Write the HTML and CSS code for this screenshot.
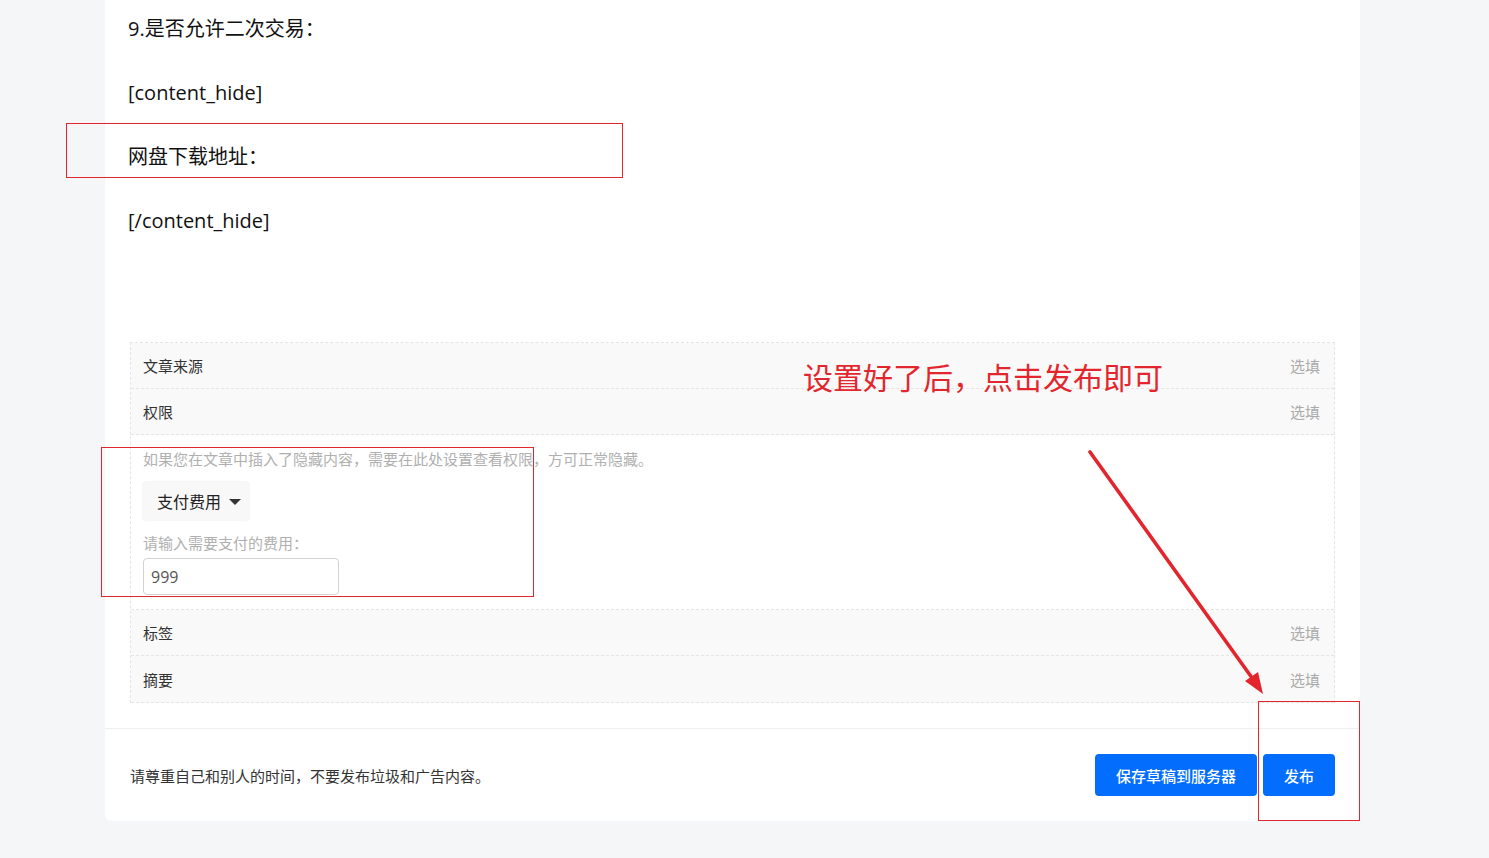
FILE: index.html
```html
<!DOCTYPE html>
<html lang="zh-CN">
<head>
  <meta charset="UTF-8">
  <title>发布文章</title>
  <link rel="stylesheet" href="styles.css">
</head>
<body>
  <div class="card">
    <div class="card-body">
      <div class="editor">
        <p>9.是否允许二次交易：</p>
        <p>[content_hide]</p>
        <p>网盘下载地址：</p>
        <p>[/content_hide]</p>
      </div>

      <div class="meta-box">
        <div class="meta-row"><span>文章来源</span><span class="opt">选填</span></div>
        <div class="meta-row"><span>权限</span><span class="opt">选填</span></div>
        <div class="meta-panel">
          <p class="hint">如果您在文章中插入了隐藏内容，需要在此处设置查看权限，方可正常隐藏。</p>
          <button class="dropdown">支付费用 <span class="caret"></span></button>
          <label class="hint">请输入需要支付的费用：</label>
          <input class="price" type="text" value="999">
        </div>
        <div class="meta-row"><span>标签</span><span class="opt">选填</span></div>
        <div class="meta-row"><span>摘要</span><span class="opt">选填</span></div>
      </div>
    </div>

    <div class="card-foot">
      <span class="notice">请尊重自己和别人的时间，不要发布垃圾和广告内容。</span>
      <div class="actions">
        <button class="btn">保存草稿到服务器</button>
        <button class="btn">发布</button>
      </div>
    </div>
  </div>

  <!-- 标注 -->
  <div class="mark mark-1"></div>
  <div class="mark mark-2"></div>
  <div class="mark mark-3"></div>
  <div class="mark-text">设置好了后，点击发布即可</div>
  <svg class="arrow" width="1489" height="858" viewBox="0 0 1489 858">
    <line x1="1090" y1="452" x2="1255" y2="682" stroke="#e3262d" stroke-width="3.6" stroke-linecap="round"/>
    <polygon points="1263,694 1245,681 1258,672" fill="#e3262d"/>
  </svg>
</body>
</html>
```

FILE: styles.css
```css
body {
  margin: 0;
  height: 858px;
  overflow: hidden;
  position: relative;
  background: #f5f6f8;
  font-family: "Open Sans", "Noto Sans CJK SC", sans-serif;
  color: #222;
}
.card {
  width: 1255px;
  margin-left: 105px;
  background: #fff;
  border-radius: 0 0 6px 6px;
}
.card-body {
  padding: 0 25px 25px;
}
.editor {
  height: 342px;
  box-sizing: border-box;
  padding-top: 13px;
  margin: 0 -2px;
}
.editor p {
  margin: 0 0 32px;
  font-size: 20px;
  line-height: 32px;
  color: #111;
}
.meta-box {
  border: 1px dashed #e4e4e4;
  border-bottom: none;
  font-size: 15px;
}
.meta-row {
  display: flex;
  justify-content: space-between;
  align-items: center;
  height: 46px;
  box-sizing: border-box;
  padding: 0 14px 0 12px;
  background: #f9f9f9;
  border-bottom: 1px dashed #e4e4e4;
  color: #333;
}
.meta-row:last-child {
  height: 47px;
}
.meta-row .opt {
  color: #aaa;
}
.meta-panel {
  padding: 12px 12px 14px;
  border-bottom: 1px dashed #e4e4e4;
  background: #fff;
}
.hint {
  display: block;
  margin: 0;
  color: #b0b0b0;
  font-size: 15px;
  line-height: 24px;
}
.dropdown {
  display: flex;
  align-items: center;
  gap: 8px;
  height: 38px;
  width: 106px;
  margin: 11px 0 11px;
  padding: 0 0 0 14px;
  border: none;
  border-radius: 4px;
  background: #f8f8f8;
  box-shadow: 0 0 2px rgba(0, 0, 0, 0.12);
  font-family: inherit;
  font-size: 16px;
  color: #222;
}
.caret {
  width: 0;
  height: 0;
  border-left: 6px solid transparent;
  border-right: 6px solid transparent;
  border-top: 6px solid #333;
  margin-top: 2px;
}
.price {
  display: block;
  width: 196px;
  height: 37px;
  box-sizing: border-box;
  margin-top: 3px;
  padding: 0 7px;
  border: 1px solid #d2d2d2;
  border-radius: 4px;
  font-family: inherit;
  font-size: 16px;
  color: #555;
}
.card-foot {
  display: flex;
  justify-content: space-between;
  align-items: center;
  padding: 25px 25px;
  border-top: 1px solid #eee;
}
.notice {
  font-size: 15px;
  color: #333;
}
.actions {
  display: flex;
  gap: 6px;
}
.btn {
  height: 42px;
  padding: 0 21px;
  border: none;
  border-radius: 4px;
  background: #036dfd;
  color: #fff;
  font-family: inherit;
  font-size: 15px;
  font-weight: 500;
}
.mark {
  position: absolute;
  border: 1px solid #e3262d;
}
.mark-1 { left: 66px; top: 123px; width: 555px; height: 53px; }
.mark-2 { left: 101px; top: 447px; width: 431px; height: 148px; }
.mark-3 { left: 1258px; top: 701px; width: 100px; height: 118px; }
.mark-text {
  position: absolute;
  left: 803px;
  top: 355px;
  font-family: "Noto Sans CJK SC", sans-serif;
  font-size: 30px;
  line-height: 42px;
  color: #e3262d;
}
.arrow {
  position: absolute;
  left: 0;
  top: 0;
}
```
